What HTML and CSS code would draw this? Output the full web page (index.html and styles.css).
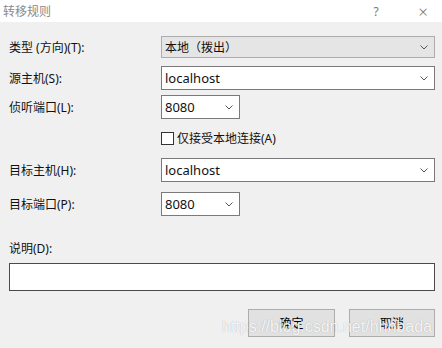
FILE: index.html
```html
<!DOCTYPE html>
<html lang="zh-CN">
<head>
<meta charset="utf-8">
<title>转移规则</title>
<link rel="stylesheet" href="styles.css">
</head>
<body>
<div class="dialog">
  <div class="titlebar">
    <span class="title">转移规则</span>
    <span class="tb-btns"><span class="help">?</span><span class="close">×</span></span>
  </div>
  <div class="content">
    <div class="row r-type">
      <label class="lbl">类型 (方向)(T):</label>
      <div class="combo combo-ro wide"><span>本地（拨出）</span><svg class="chev" viewBox="0 0 8 5" width="8" height="5"><path d="M0.5 0.5 L4 4 L7.5 0.5" fill="none" stroke="#555" stroke-width="1"/></svg></div>
    </div>
    <div class="row r-src">
      <label class="lbl">源主机(S):</label>
      <div class="combo wide"><span>localhost</span><svg class="chev" viewBox="0 0 8 5" width="8" height="5"><path d="M0.5 0.5 L4 4 L7.5 0.5" fill="none" stroke="#555" stroke-width="1"/></svg></div>
    </div>
    <div class="row r-port">
      <label class="lbl">侦听端口(L):</label>
      <div class="combo narrow"><span>8080</span><svg class="chev" viewBox="0 0 8 5" width="8" height="5"><path d="M0.5 0.5 L4 4 L7.5 0.5" fill="none" stroke="#555" stroke-width="1"/></svg></div>
    </div>
    <div class="row r-check">
      <span class="lbl"></span>
      <label class="check"><span class="box"></span>仅接受本地连接(A)</label>
    </div>
    <div class="row r-dst">
      <label class="lbl">目标主机(H):</label>
      <div class="combo wide"><span>localhost</span><svg class="chev" viewBox="0 0 8 5" width="8" height="5"><path d="M0.5 0.5 L4 4 L7.5 0.5" fill="none" stroke="#555" stroke-width="1"/></svg></div>
    </div>
    <div class="row r-dport">
      <label class="lbl">目标端口(P):</label>
      <div class="combo narrow"><span>8080</span><svg class="chev" viewBox="0 0 8 5" width="8" height="5"><path d="M0.5 0.5 L4 4 L7.5 0.5" fill="none" stroke="#555" stroke-width="1"/></svg></div>
    </div>
    <label class="desc-lbl">说明(D):</label>
    <div class="textbox"></div>
    <div class="buttons">
      <button class="btn">确定</button>
      <button class="btn">取消</button>
    </div>
  </div>
  <div class="watermark">https://blog.csdn.net/hhhbada</div>
</div>
</body>
</html>
```
FILE: styles.css
```css
html, body {
  margin: 0;
  padding: 0;
}
body {
  width: 442px;
  height: 348px;
  overflow: hidden;
  background: #f0f0f0;
  font-family: "Noto Sans", "Noto Sans CJK SC", sans-serif;
  font-size: 12px;
  color: #111;
}
.dialog {
  position: relative;
  width: 442px;
  height: 348px;
}
.titlebar {
  height: 22px;
  background: #fff;
  display: flex;
  align-items: center;
  justify-content: space-between;
  padding: 0 0 0 3px;
}
.title {
  color: #8a8a8a;
  font-size: 12px;
}
.tb-btns {
  display: flex;
  align-items: center;
  color: #777;
}
.help {
  width: 20px;
  margin-right: 27px;
  text-align: center;
  font-size: 12px;
}
.close {
  width: 20px;
  margin-right: 9px;
  text-align: center;
  font-size: 17px;
  font-weight: 300;
}
.content {
  padding: 14px 7px 0 9px;
  display: flex;
  flex-direction: column;
}
.row {
  display: flex;
  align-items: center;
}
.lbl {
  width: 152px;
  flex: none;
}
.combo {
  box-sizing: border-box;
  height: 24px;
  background: #fff;
  border: 1px solid #7a7a7a;
  display: flex;
  align-items: center;
  justify-content: space-between;
  padding: 0 6px 0 3px;
}
.combo span {
  font-size: 13px;
}
.combo-ro {
  height: 22px;
  background: #e5e5e5;
  border-color: #adadad;
}
.combo-ro span {
  font-size: 12px;
}
.wide { width: 274px; }
.narrow { width: 79px; }
.r-src { margin-top: 8px; }
.r-port { margin-top: 5px; }
.r-check { margin-top: 10px; }
.r-dst { margin-top: 11px; }
.r-dport { margin-top: 10px; }
.check {
  display: flex;
  align-items: center;
  gap: 3px;
  font-size: 12px;
}
.box {
  box-sizing: border-box;
  width: 13px;
  height: 13px;
  border: 1px solid #333;
  background: #fff;
}
.desc-lbl {
  margin-top: 24px;
  line-height: 17px;
}
.textbox {
  box-sizing: border-box;
  margin-top: 6px;
  width: 426px;
  height: 28px;
  background: #fff;
  border: 1px solid #4a4a4a;
}
.buttons {
  margin-top: 18px;
  display: flex;
  justify-content: flex-end;
  gap: 14px;
}
.btn {
  box-sizing: border-box;
  width: 87px;
  height: 28px;
  margin: 0;
  background: #e1e1e1;
  border: 1px solid #adadad;
  font-family: inherit;
  font-size: 12px;
  color: #000;
  padding: 0;
}
.buttons .btn:last-child { width: 86px; }
.watermark {
  position: absolute;
  left: 222px;
  top: 318px;
  font-family: "Liberation Sans", Arial, sans-serif;
  font-size: 16px;
  color: rgba(255, 255, 255, 0.9);
  text-shadow: 0 0 1px rgba(120, 120, 120, 0.6);
  white-space: nowrap;
}
```
